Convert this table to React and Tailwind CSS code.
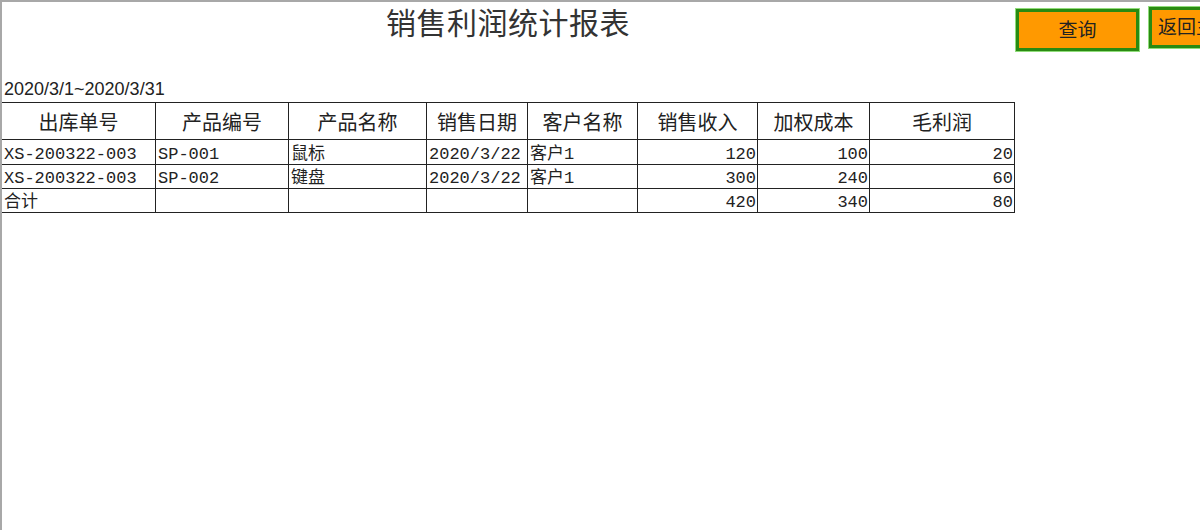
const cols = [
  { label: "出库单号", w: 154 },
  { label: "产品编号", w: 133 },
  { label: "产品名称", w: 138 },
  { label: "销售日期", w: 101 },
  { label: "客户名称", w: 110 },
  { label: "销售收入", w: 120 },
  { label: "加权成本", w: 112 },
  { label: "毛利润", w: 145 },
];

const rows = [
  ["XS-200322-003", "SP-001", "鼠标", "2020/3/22", "客户1", "120", "100", "20"],
  ["XS-200322-003", "SP-002", "键盘", "2020/3/22", "客户1", "300", "240", "60"],
  ["合计", "", "", "", "", "420", "340", "80"],
];

const cellFont = { fontFamily: '"Liberation Mono", "Noto Sans CJK SC", monospace' };

export default function App() {
  return (
    <div
      className="w-[1200px] h-[530px] overflow-hidden bg-white border-l-2 border-t-2 border-[#a8a8a8] text-[#222]"
      style={{ fontFamily: '"Liberation Sans", "Noto Sans CJK SC", sans-serif' }}
    >
      <div className="flex items-start">
        <div className="w-[1012px] shrink-0 text-center text-[30px] leading-[30px] pt-[7px] text-[#333] tracking-[0.5px]">
          销售利润统计报表
        </div>
        <button className="shrink-0 ml-[2px] mt-[7px] w-[123px] h-[42px] bg-[#ff9900] border-[3px] border-[#2a8a12] shadow-[0_0_0_1px_#8fdc7a] text-[19px] text-[#222] leading-none">
          查询
        </button>
        <button className="shrink-0 ml-[10px] mt-[5px] w-[123px] h-[41px] bg-[#ff9900] border-[3px] border-[#2a8a12] shadow-[0_0_0_1px_#8fdc7a] text-[19px] text-[#222] leading-none text-left pl-[6px] whitespace-nowrap">
          返回主页
        </button>
      </div>

      <div className="pl-[2px] mt-[28px] text-[18px] leading-[20px] text-[#222]">
        2020/3/1~2020/3/31
      </div>

      <table className="table-fixed border-collapse mt-[3px] -ml-[1px]">
        <colgroup>
          {cols.map((c) => (
            <col key={c.label} style={{ width: c.w }} />
          ))}
        </colgroup>
        <thead>
          <tr className="h-[37px]">
            {cols.map((c) => (
              <th
                key={c.label}
                className="border border-[#222] font-normal text-[20px] text-center align-middle pt-[3px] px-0 leading-none"
              >
                {c.label}
              </th>
            ))}
          </tr>
        </thead>
        <tbody>
          {rows.map((r, i) => (
            <tr key={i} className={i === 0 ? "h-[25px]" : "h-[24px]"}>
              {r.map((v, j) => (
                <td
                  key={j}
                  style={cellFont}
                  className={
                    "border border-[#222] text-[17px] leading-[18px] align-bottom p-0 whitespace-nowrap overflow-hidden " +
                    (j >= 5 ? "text-right pr-[1px]" : "text-left pl-[2px]")
                  }
                >
                  {v}
                </td>
              ))}
            </tr>
          ))}
        </tbody>
      </table>
    </div>
  );
}
